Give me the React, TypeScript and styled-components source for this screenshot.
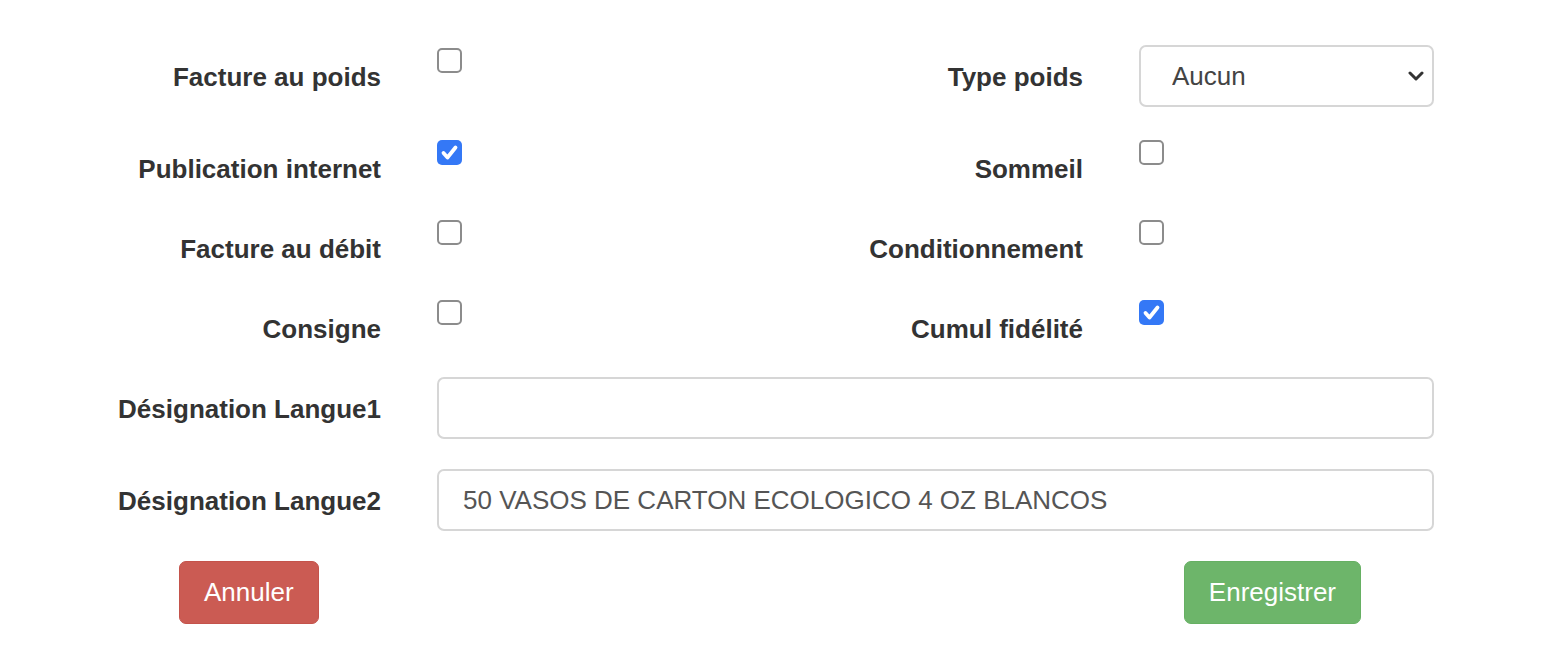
import React from "react";
import styled, { createGlobalStyle } from "styled-components";

const GlobalStyle = createGlobalStyle`
  html, body { margin: 0; padding: 0; background: #fff; }
  body { font-family: "Liberation Sans", Arial, Helvetica, sans-serif; }
  * { box-sizing: border-box; }
`;

const Form = styled.form`
  display: grid;
  grid-template-columns: 381px 200px 390px 295px;
  column-gap: 56px;
  row-gap: 30px;
  padding-top: 45px;
  align-items: start;
`;

const Label = styled.label`
  display: block;
  height: 50px;
  text-align: right;
  font-weight: 700;
  font-size: 26px;
  line-height: 36px;
  padding-top: 14px;
  color: #333;
  white-space: nowrap;
`;

const CheckCell = styled.div`
  padding-top: 3px;
  height: 50px;
`;

const Box = styled.span<{ $checked?: boolean }>`
  display: flex;
  align-items: center;
  justify-content: center;
  width: 25px;
  height: 25px;
  border-radius: 5px;
  border: ${(p) => (p.$checked ? "none" : "2px solid #8c8c8c")};
  background: ${(p) => (p.$checked ? "#3478f6" : "#fff")};
`;

const SelectWrap = styled.div`
  position: relative;
  height: 62px;
`;

const Select = styled.select`
  appearance: none;
  -webkit-appearance: none;
  width: 100%;
  height: 62px;
  border: 2px solid #d6d6d6;
  border-radius: 7px;
  background: #fff;
  padding: 0 60px 0 31px;
  font-family: "Liberation Sans", Arial, sans-serif;
  font-size: 26px;
  color: #444;
  outline: none;
`;

const Chevron = styled.svg`
  position: absolute;
  right: 10px;
  top: 25px;
  pointer-events: none;
`;

const Input = styled.input`
  grid-column: 2 / -1;
  width: 100%;
  height: 62px;
  border: 2px solid #d6d6d6;
  border-radius: 7px;
  padding: 0 24px;
  font-family: "Liberation Sans", Arial, sans-serif;
  font-size: 26px;
  color: #555;
  outline: none;
`;

const Actions = styled.div`
  grid-column: 1 / -1;
  display: flex;
  justify-content: space-between;
  padding: 0 73px 0 179px;
`;

const Button = styled.button<{ $variant: "danger" | "success" }>`
  height: 63px;
  padding: 0 24px;
  border-radius: 7px;
  border: 1px solid ${(p) => (p.$variant === "danger" ? "#c4534b" : "#66b063")};
  background: ${(p) => (p.$variant === "danger" ? "#cb5b53" : "#6db56a")};
  color: #fff;
  font-family: "Liberation Sans", Arial, sans-serif;
  font-size: 26px;
  cursor: pointer;
`;

const Checkbox = ({ checked }: { checked?: boolean }) => (
  <CheckCell>
    <Box $checked={checked}>
      {checked && (
        <svg width="25" height="25" viewBox="0 0 25 25">
          <path
            d="M6.5 13 L10.5 17.5 L18.5 7.5"
            fill="none"
            stroke="#fff"
            strokeWidth="3.8"
            strokeLinecap="round"
            strokeLinejoin="round"
          />
        </svg>
      )}
    </Box>
  </CheckCell>
);

export default function App() {
  return (
    <>
      <GlobalStyle />
      <Form onSubmit={(e) => e.preventDefault()}>
        <Label>Facture au poids</Label>
        <Checkbox />
        <Label>Type poids</Label>
        <SelectWrap>
          <Select defaultValue="Aucun">
            <option>Aucun</option>
          </Select>
          <Chevron width="16" height="12" viewBox="0 0 16 12">
            <path d="M2 3 L8 9 L14 3" fill="none" stroke="#333" strokeWidth="3" strokeLinecap="round" strokeLinejoin="round" />
          </Chevron>
        </SelectWrap>

        <Label>Publication internet</Label>
        <Checkbox checked />
        <Label>Sommeil</Label>
        <Checkbox />

        <Label>Facture au débit</Label>
        <Checkbox />
        <Label>Conditionnement</Label>
        <Checkbox />

        <Label>Consigne</Label>
        <Checkbox />
        <Label>Cumul fidélité</Label>
        <Checkbox checked />

        <Label>Désignation Langue1</Label>
        <Input defaultValue="" />

        <Label>Désignation Langue2</Label>
        <Input defaultValue="50 VASOS DE CARTON ECOLOGICO 4 OZ BLANCOS" />

        <Actions>
          <Button type="button" $variant="danger">Annuler</Button>
          <Button type="submit" $variant="success">Enregistrer</Button>
        </Actions>
      </Form>
    </>
  );
}
